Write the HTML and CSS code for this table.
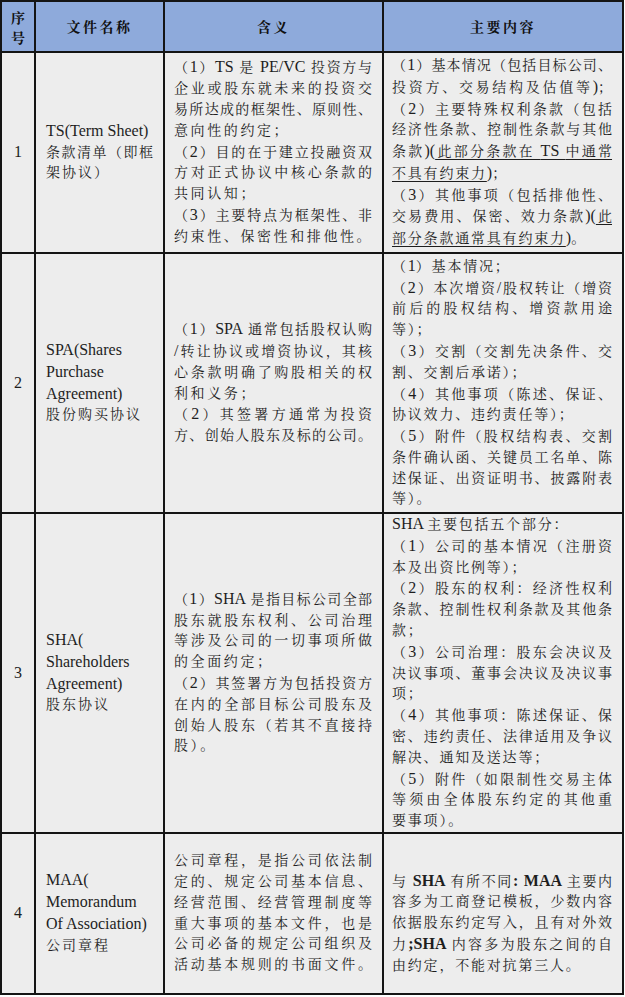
FILE: index.html
```html
<!DOCTYPE html>
<html lang="zh-CN">
<head>
<meta charset="utf-8">
<title>投资文件对照表</title>
<link rel="stylesheet" href="styles.css">
</head>
<body>
<div class="tbl">
  <div class="c h hn"><div>序</div><div>号</div></div>
  <div class="c h hs">文件名称</div>
  <div class="c h hs">含义</div>
  <div class="c h hs">主要内容</div>

  <div class="c num">1</div>
  <div class="c name">
    <div class="ln"><span class="en">TS(Term Sheet)</span></div>
    <div class="ln j t">条款清单（即框</div>
    <div class="ln">架协议）</div>
  </div>
  <div class="c mean">
    <div class="ln j">（<span class="en">1</span>）<span class="en">TS </span>是 <span class="en">PE/VC </span>投资方与</div>
    <div class="ln j">企业或股东就未来的投资交</div>
    <div class="ln j">易所达成的框架性、原则性、</div>
    <div class="ln">意向性的约定；</div>
    <div class="ln j">（<span class="en">2</span>）目的在于建立投融资双</div>
    <div class="ln j">方对正式协议中核心条款的</div>
    <div class="ln">共同认知；</div>
    <div class="ln j">（<span class="en">3</span>）主要特点为框架性、非</div>
    <div class="ln">约束性、保密性和排他性。</div>
  </div>
  <div class="c main">
    <div class="ln j">（<span class="en">1</span>）基本情况（包括目标公司、</div>
    <div class="ln j">投资方、交易结构及估值等<span class="en">)</span>；</div>
    <div class="ln j">（<span class="en">2</span>）主要特殊权利条款（包括</div>
    <div class="ln j">经济性条款、控制性条款与其他</div>
    <div class="ln j">条款<span class="en">)(</span><span class="u">此部分条款在 <span class="en">TS </span>中通常</span></div>
    <div class="ln"><span class="u">不具有约束力</span><span class="en">)</span>；</div>
    <div class="ln j">（<span class="en">3</span>）其他事项（包括排他性、</div>
    <div class="ln j">交易费用、保密、效力条款<span class="en">)(</span><span class="u">此</span></div>
    <div class="ln"><span class="u">部分条款通常具有约束力</span><span class="en">)</span>。</div>
  </div>

  <div class="c num">2</div>
  <div class="c name">
    <div class="ln"><span class="en">SPA(Shares</span></div>
    <div class="ln"><span class="en">Purchase</span></div>
    <div class="ln"><span class="en">Agreement)</span></div>
    <div class="ln">股份购买协议</div>
  </div>
  <div class="c mean">
    <div class="ln j">（<span class="en">1</span>）<span class="en">SPA </span>通常包括股权认购</div>
    <div class="ln j"><span class="en">/</span>转让协议或增资协议，其核</div>
    <div class="ln j">心条款明确了购股相关的权</div>
    <div class="ln">利和义务；</div>
    <div class="ln j">（<span class="en">2</span>）其签署方通常为投资</div>
    <div class="ln j">方、创始人股东及标的公司。</div>
  </div>
  <div class="c main">
    <div class="ln">（<span class="en">1</span>）基本情况；</div>
    <div class="ln j">（<span class="en">2</span>）本次增资<span class="en">/</span>股权转让（增资</div>
    <div class="ln j">前后的股权结构、增资款用途</div>
    <div class="ln">等）；</div>
    <div class="ln j">（<span class="en">3</span>）交割（交割先决条件、交</div>
    <div class="ln">割、交割后承诺）；</div>
    <div class="ln j">（<span class="en">4</span>）其他事项（陈述、保证、</div>
    <div class="ln">协议效力、违约责任等）；</div>
    <div class="ln j">（<span class="en">5</span>）附件（股权结构表、交割</div>
    <div class="ln j">条件确认函、关键员工名单、陈</div>
    <div class="ln j">述保证、出资证明书、披露附表</div>
    <div class="ln">等）。</div>
  </div>

  <div class="c num">3</div>
  <div class="c name">
    <div class="ln"><span class="en">SHA(</span></div>
    <div class="ln"><span class="en">Shareholders</span></div>
    <div class="ln"><span class="en">Agreement)</span></div>
    <div class="ln">股东协议</div>
  </div>
  <div class="c mean">
    <div class="ln j">（<span class="en">1</span>）<span class="en">SHA </span>是指目标公司全部</div>
    <div class="ln j">股东就股东权利、公司治理</div>
    <div class="ln j">等涉及公司的一切事项所做</div>
    <div class="ln">的全面约定；</div>
    <div class="ln j">（<span class="en">2</span>）其签署方为包括投资方</div>
    <div class="ln j">在内的全部目标公司股东及</div>
    <div class="ln j">创始人股东（若其不直接持</div>
    <div class="ln">股）。</div>
  </div>
  <div class="c main">
    <div class="ln"><span class="en">SHA </span>主要包括五个部分：</div>
    <div class="ln j">（<span class="en">1</span>）公司的基本情况（注册资</div>
    <div class="ln">本及出资比例等）；</div>
    <div class="ln j">（<span class="en">2</span>）股东的权利：经济性权利</div>
    <div class="ln j">条款、控制性权利条款及其他条</div>
    <div class="ln">款；</div>
    <div class="ln j">（<span class="en">3</span>）公司治理：股东会决议及</div>
    <div class="ln j">决议事项、董事会决议及决议事</div>
    <div class="ln">项；</div>
    <div class="ln j">（<span class="en">4</span>）其他事项：陈述保证、保</div>
    <div class="ln j">密、违约责任、法律适用及争议</div>
    <div class="ln">解决、通知及送达等；</div>
    <div class="ln j">（<span class="en">5</span>）附件（如限制性交易主体</div>
    <div class="ln j">等须由全体股东约定的其他重</div>
    <div class="ln">要事项）。</div>
  </div>

  <div class="c num">4</div>
  <div class="c name">
    <div class="ln"><span class="en">MAA(</span></div>
    <div class="ln"><span class="en">Memorandum</span></div>
    <div class="ln"><span class="en">Of Association)</span></div>
    <div class="ln">公司章程</div>
  </div>
  <div class="c mean">
    <div class="ln j">公司章程，是指公司依法制</div>
    <div class="ln j">定的、规定公司基本信息、</div>
    <div class="ln j">经营范围、经营管理制度等</div>
    <div class="ln j">重大事项的基本文件，也是</div>
    <div class="ln j">公司必备的规定公司组织及</div>
    <div class="ln j">活动基本规则的书面文件。</div>
  </div>
  <div class="c main last">
    <div class="ln j">与 <span class="en b">SHA </span>有所不同<span class="en b">: MAA </span>主要内</div>
    <div class="ln j">容多为工商登记模板，少数内容</div>
    <div class="ln j">依据股东约定写入，且有对外效</div>
    <div class="ln j">力<span class="en b">;SHA </span>内容多为股东之间的自</div>
    <div class="ln">由约定，不能对抗第三人。</div>
  </div>
</div>
</body>
</html>
```

FILE: styles.css
```css
html, body {
  margin: 0;
  padding: 0;
  background: #ffffff;
}

body {
  font-family: "Liberation Serif", "Noto Serif CJK SC", "Noto Sans CJK SC", serif;
  color: #1e1e1e;
}

.tbl {
  display: grid;
  grid-template-columns: 32px 127px 217px 238px;
  grid-template-rows: 49px 199px 258px 318px 159px;
  gap: 2px;
  padding: 2px;
  width: 624px;
  box-sizing: border-box;
  background: #141414;
}

.c {
  background: #ededed;
  display: flex;
  flex-direction: column;
  justify-content: center;
  font-size: 14px;
  line-height: 20.8px;
  box-sizing: border-box;
  overflow: hidden;
}

.h {
  background: #8eaadb;
  align-items: center;
  font-family: "Noto Serif CJK SC", "Noto Sans CJK SC", serif;
  font-weight: 700;
  color: #111;
}

.hn {
  line-height: 20px;
}

.hs {
  letter-spacing: 2.5px;
}

.num {
  align-items: center;
  font-size: 16px;
}

.name {
  padding: 0 10px 0 10px;
  letter-spacing: 2px;
}

.name .t {
  letter-spacing: 0;
}

.mean {
  padding: 0 10px 0 9px;
  letter-spacing: 2.6px;
}

.main {
  padding: 0 10px 0 8px;
  letter-spacing: 1.8px;
}

.last {
  padding-top: 20px;
}

.ln {
  white-space: nowrap;
}

.j {
  white-space: normal;
  text-align: justify;
  text-align-last: justify;
  letter-spacing: 0;
}

.en {
  font-family: "Liberation Serif", serif;
  font-size: 16px;
  letter-spacing: 0;
}

.b {
  font-weight: 700;
}

.u {
  text-decoration: underline;
  text-decoration-thickness: 1px;
  text-underline-offset: 3px;
}
```
